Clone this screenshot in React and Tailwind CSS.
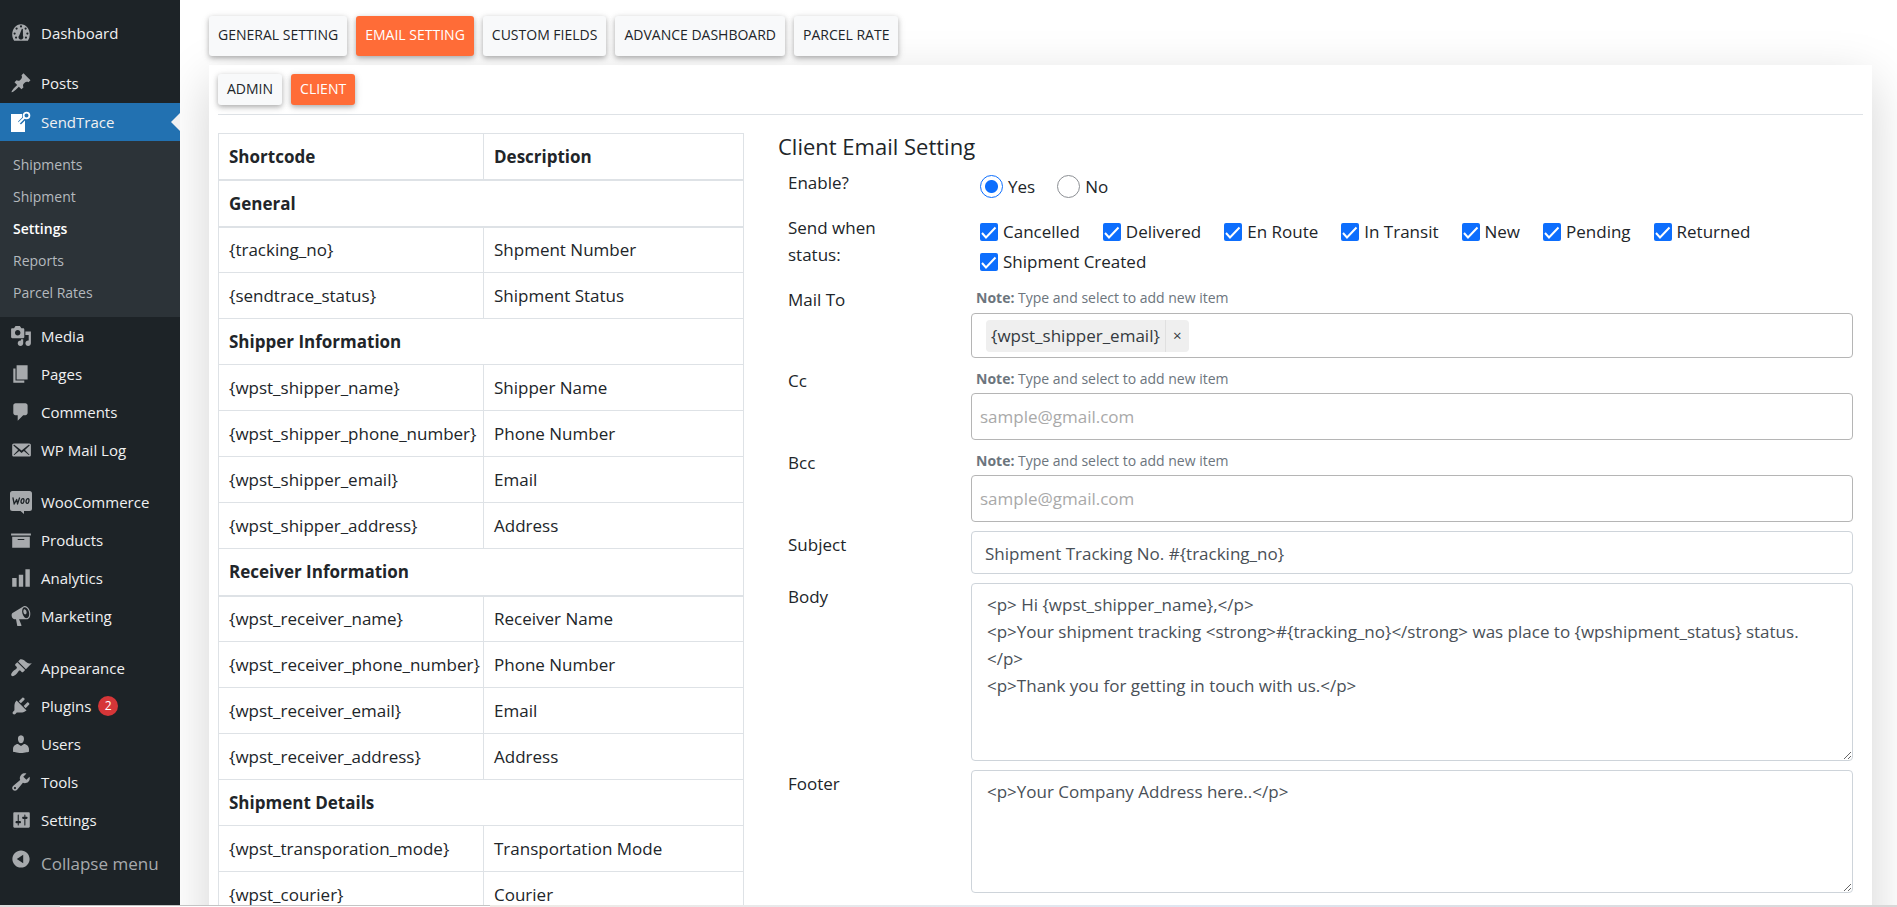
import { Fragment } from "react";

const ICONS = {
  dashboard:
    "M3.76 17h12.48A9.9 9.9 0 0 0 18 11.38C18 6.2 14.42 2 10 2S2 6.2 2 11.38c0 2.07.66 4 1.76 5.62zM9 4a1 1 0 1 1 2 0 1 1 0 0 1-2 0zM5 6a1 1 0 1 1 2 0 1 1 0 0 1-2 0zm8.2 0a1 1 0 1 1 2 0 1 1 0 0 1-2 0zM3.2 10.500a1 1 0 1 1 2 0 1 1 0 0 1-2 0zm11.6 0a1 1 0 1 1 2 0 1 1 0 0 1-2 0zM4.5 14.200a1 1 0 1 1 2 0 1 1 0 0 1-2 0zm9 0a1 1 0 1 1 2 0 1 1 0 0 1-2 0zM10.8 6.200l.9.2.1 6.4c.4.5.5 1.2.1 1.9-.6 1.2-2.3 1.6-3.4.7-1-.8-1-2.3-.1-3.100z",
  pin: "M10.44 3.02l1.82-1.82 6.36 6.35-1.83 1.82c-1.05-.68-2.48-.57-3.41.36l-.75.75c-.92.93-1.04 2.35-.35 3.41l-1.83 1.82-2.41-2.41-2.8 2.79c-.42.42-3.38 2.71-3.8 2.29s1.86-3.39 2.28-3.81l2.79-2.79L4.1 9.36l1.83-1.82c1.05.69 2.48.57 3.4-.36l.75-.75c.93-.92 1.05-2.35.36-3.41z",
  media:
    "M13 11V4c0-.55-.45-1-1-1h-1.67L9 1H5L3.67 3H2c-.55 0-1 .45-1 1v7c0 .55.45 1 1 1h10c.55 0 1-.45 1-1zM7 4.5c1.38 0 2.5 1.12 2.5 2.5S8.38 9.5 7 9.500 4.5 8.38 4.5 7 5.62 4.5 7 4.500zM14 6h5v10.5c0 1.38-1.12 2.5-2.5 2.5S14 17.88 14 16.5s1.12-2.5 2.5-2.5c.17 0 .34.02.5.05V9h-3V6zm-4 8.05V13h2v3.5c0 1.38-1.12 2.5-2.5 2.5S7 17.88 7 16.5 8.12 14 9.5 14c.17 0 .34.02.5.05z",
  page: "M6 15V2h10v13H6zm-1 1h8v2H3V5h2v11z",
  comment:
    "M5 2h9c1.1 0 2 .9 2 2v7c0 1.1-.9 2-2 2h-2l-5 5v-5H5c-1.1 0-2-.9-2-2V4c0-1.1.9-2 2-2z",
  mail: "M19 14.5v-9c0-.83-.67-1.5-1.5-1.5H3.49c-.83 0-1.5.67-1.5 1.5v9c0 .83.67 1.5 1.5 1.5H17.5c.83 0 1.5-.67 1.5-1.5zm-1.31-9.11c.33.33.15.67-.03.84L13.6 9.95l3.9 4.06c.12.14.2.36.06.51-.13.16-.43.15-.56.05l-4.37-3.73-2.14 1.95-2.13-1.95-4.37 3.73c-.13.1-.43.11-.56-.05-.14-.15-.06-.37.06-.51l3.9-4.06-4.06-3.72c-.18-.17-.36-.51-.03-.84s.67-.17.95.07l6.24 5.04 6.25-5.04c.28-.24.62-.4.95-.07z",
  archive: "M19 4v2H1V4h18zM2 7h16v10H2V7zm11 3V9H7v1h6z",
  chart: "M18 18V2h-4v16h4zm-6 0V7H8v11h4zm-6 0v-8H2v8h4z",
  megaphone:
    "M18.15 5.94c.46 1.62.38 3.22-.02 4.48-.42 1.28-1.26 2.18-2.3 2.48-.16.06-.26.06-.4.06-.06.02-.12.02-.18.02-.06.02-.14.02-.22.02h-6.8l2.22 5.5c.02.14-.06.26-.14.34-.08.1-.24.16-.34.16H6.95c-.1 0-.26-.06-.34-.16-.08-.08-.16-.2-.14-.34l-1-5.5H4.25l-.02-.02c-.5.06-1.08-.18-1.54-.62s-.88-1.08-1.06-1.88c-.24-.8-.2-1.56-.02-2.2.18-.62.58-1.08 1.06-1.3l.02-.02 9-5.4c.1-.06.18-.1.24-.16.06-.04.14-.08.24-.12.16-.08.28-.12.5-.18 1.04-.3 2.24.1 3.22.98s1.84 2.24 2.26 3.86zm-2.58 5.98h-.02c.4-.1.74-.34 1.04-.7.58-.7.86-1.76.86-3.04 0-.64-.1-1.3-.28-1.98-.34-1.36-1.02-2.5-1.78-3.24s-1.68-1.1-2.46-.88c-.82.22-1.4.96-1.7 2-.32 1.04-.28 2.36.06 3.72.38 1.36 1 2.5 1.8 3.24.78.74 1.62 1.1 2.48.88zm-2.54-7.96c.22-.04.42-.02.62.04.38.16.76.48 1.02 1s.42 1.2.42 1.78c0 .3-.04.56-.12.8-.18.48-.44.84-.86.94-.34.1-.8-.06-1.14-.4s-.64-.86-.78-1.5c-.18-.62-.12-1.24.02-1.72s.48-.84.82-.94z",
  brush:
    "M14.48 11.06L7.41 3.99l1.5-1.5c.5-.56 2.3-.47 3.51.32 1.21.8 1.43 1.28 2.91 2.1 1.18.64 2.45 1.26 4.45.85zm-.71.71L6.7 4.7 4.93 6.47c-.39.39-.39 1.02 0 1.41l1.06 1.06c.39.39.39 1.03 0 1.42-.6.6-1.43 1.11-2.21 1.69-.35.26-.7.53-1.01.84C1.43 14.23.4 16.08 1.4 17.07c.99 1 2.84-.03 4.18-1.36.31-.31.58-.66.85-1.02.57-.78 1.08-1.61 1.69-2.21.39-.39 1.02-.39 1.41 0l1.06 1.06c.39.39 1.02.39 1.41 0z",
  plug: "M13.11 4.36L9.87 7.6 8 5.73l3.24-3.24c.35-.34 1.05-.2 1.56.32.52.51.66 1.21.31 1.55zm-8 1.77l.91-1.12 9.01 9.01-1.19.84c-.71.71-2.63 1.16-3.82 1.16H6.14L4.9 17.26c-.59.59-1.54.59-2.12 0-.59-.58-.59-1.53 0-2.12l1.24-1.24v-3.88c0-1.13.4-3.19 1.09-3.89zm7.26 3.97l3.24-3.24c.34-.35 1.04-.21 1.55.31.52.51.66 1.21.31 1.55l-3.24 3.25z",
  user: "M10 9.25c-2.27 0-2.73-3.44-2.73-3.44C7 4.02 7.82 2 9.97 2c2.16 0 2.98 2.02 2.71 3.81 0 0-.41 3.44-2.68 3.44zm0 2.57L12.72 10c2.39 0 4.52 2.33 4.52 4.53v2.49s-3.65 1.13-7.24 1.13c-3.65 0-7.24-1.13-7.24-1.13v-2.49c0-2.25 1.94-4.48 4.47-4.48z",
  wrench:
    "M16.68 9.77c-1.34 1.34-3.3 1.67-4.95.99l-5.41 6.52c-.99.99-2.59.99-3.58 0s-.99-2.59 0-3.57l6.52-5.42c-.68-1.65-.35-3.61.99-4.95 1.28-1.28 3.12-1.62 4.72-1.06l-2.89 2.89 2.82 2.82 2.86-2.87c.53 1.58.18 3.39-1.08 4.65zM3.81 16.21c.4.39 1.04.39 1.43 0 .4-.4.4-1.04 0-1.43-.39-.4-1.03-.4-1.43 0-.39.39-.39 1.03 0 1.43z",
  sliders:
    "M18 16V4c0-.55-.45-1-1-1H4c-.55 0-1 .45-1 1v12c0 .55.45 1 1 1h13c.55 0 1-.45 1-1zM8 11h1c.55 0 1 .45 1 1s-.45 1-1 1H8v1.5c0 .28-.22.5-.5.5s-.5-.22-.5-.5V13H6c-.55 0-1-.45-1-1s.45-1 1-1h1V5.5c0-.28.22-.5.5-.5s.5.22.5.5V11zm5-2h-1c-.55 0-1-.45-1-1s.45-1 1-1h1V5.5c0-.28.22-.5.5-.5s.5.22.5.5V7h1c.55 0 1 .45 1 1s-.45 1-1 1h-1v5.5c0 .28-.22.5-.5.5s-.5-.22-.5-.5V9z",
  collapse:
    "M10 2.16c4.33 0 7.84 3.51 7.84 7.84s-3.51 7.84-7.84 7.84S2.16 14.33 2.16 10 5.71 2.16 10 2.16zm2 11.72V6.12L6.18 9.97z",
};

function Icon({ name }) {
  if (name === "sendtrace") {
    return (
      <svg viewBox="0 0 22 22" className="size-[22px] shrink-0" aria-hidden="true">
        <path fill="#fff" d="M1 3h12v3h2v15H1z" />
        <path fill="none" stroke="#2271b1" strokeWidth="4" d="M9.5 12l7-7" />
        <circle cx="16.500" cy="4.500" r="4.500" fill="#2271b1" />
        <path fill="none" stroke="#fff" strokeWidth="1.800" strokeLinecap="round" d="M9.500 11.500l5-5" />
        <circle cx="16.500" cy="4.500" r="2.900" fill="#2271b1" stroke="#fff" strokeWidth="1.800" />
      </svg>
    );
  }
  if (name === "woo") {
    return (
      <svg viewBox="0 0 24 24" className="-mx-px size-6 shrink-0" aria-hidden="true">
        <path
          fill="#a7aaad"
          d="M3.500 1h17A2.500 2.500 0 0 1 23 3.500v15a2.500 2.500 0 0 1-2.500 2.500H15v3l-3.500-3h-8A2.500 2.500 0 0 1 1 18.500v-15A2.500 2.500 0 0 1 3.500 1z"
        />
        <g fill="none" stroke="#1d2327" strokeWidth="1.300" strokeLinecap="round" strokeLinejoin="round">
          <path d="M4 8l1.200 6 2.500-4.500.8 4.500L10.500 8" />
          <ellipse cx="13.500" cy="11" rx="1.400" ry="2.400" transform="rotate(12 13.500 11)" />
          <ellipse cx="18.500" cy="11" rx="1.400" ry="2.400" transform="rotate(12 18.500 11)" />
        </g>
      </svg>
    );
  }
  return (
    <svg viewBox="0 0 20 20" className="size-[22px] shrink-0 fill-[#a7aaad]" aria-hidden="true">
      <path fillRule="evenodd" d={ICONS[name]} />
    </svg>
  );
}

const SUBMENU = ["Shipments", "Shipment", "Settings", "Reports", "Parcel Rates"];

const GROUPS = [
  [
    ["media", "Media"],
    ["page", "Pages"],
    ["comment", "Comments"],
    ["mail", "WP Mail Log"],
  ],
  [
    ["woo", "WooCommerce"],
    ["archive", "Products"],
    ["chart", "Analytics"],
    ["megaphone", "Marketing"],
  ],
  [
    ["brush", "Appearance"],
    ["plug", "Plugins", 2],
    ["user", "Users"],
    ["wrench", "Tools"],
    ["sliders", "Settings"],
  ],
];

function MenuItem({ icon, label, badge, active }) {
  return (
    <li className={active ? "relative bg-[#2271b1]" : "relative"}>
      <a href="#" className="flex h-[38px] items-center gap-[9px] pl-[10px] text-[15px] text-[#f0f0f1]">
        <Icon name={icon} />
        <span>{label}</span>
        {badge ? (
          <span className="-ml-0.5 flex size-5 items-center justify-center rounded-full bg-[#d63638] text-xs text-white">
            {badge}
          </span>
        ) : null}
      </a>
      {active ? (
        <span className="absolute top-1/2 right-0 -translate-y-1/2 border-y-[9px] border-r-[9px] border-y-transparent border-r-[#f0f0f1]" />
      ) : null}
    </li>
  );
}

function Sidebar() {
  return (
    <nav aria-label="Admin menu" className="z-10 w-[180px] shrink-0 bg-[#1d2327] pt-[14px]">
      <ul>
        <MenuItem icon="dashboard" label="Dashboard" />
      </ul>
      <ul className="mt-3 flex flex-col gap-px">
        <MenuItem icon="pin" label="Posts" />
        <MenuItem icon="sendtrace" label="SendTrace" active />
      </ul>
      <ul className="bg-[#2c3338] pt-2 pb-2 text-sm">
        {SUBMENU.map((label) => (
          <li key={label}>
            <a
              href="#"
              className={
                label === "Settings"
                  ? "block pl-[13px] leading-8 font-semibold text-white"
                  : "block pl-[13px] leading-8 text-[#b4b9be]"
              }
            >
              {label}
            </a>
          </li>
        ))}
      </ul>
      <div className="flex flex-col gap-[14px]">
        {GROUPS.map((items) => (
          <ul key={items[0][1]}>
            {items.map(([icon, label, badge]) => (
              <MenuItem key={label} icon={icon} label={label} badge={badge} />
            ))}
          </ul>
        ))}
      </div>
      <button type="button" className="mt-[9px] flex items-start gap-[9px] pl-[10px] text-[17px] leading-8 text-[#a7aaad]">
        <Icon name="collapse" />
        <span>Collapse menu</span>
      </button>
    </nav>
  );
}

const TABS = ["GENERAL SETTING", "EMAIL SETTING", "CUSTOM FIELDS", "ADVANCE DASHBOARD", "PARCEL RATE"];

function Tab({ label, active, small }) {
  const size = small ? "h-[31px]" : "h-10";
  const tone = active ? "bg-[#ff6c37] text-white" : "bg-[#f8f9fa] text-[#212529]";
  return (
    <button
      type="button"
      className={`${size} ${tone} rounded-[3px] px-[9px] pb-0.5 text-sm shadow-[0_2px_5px_rgba(0,0,0,0.26),0_2px_10px_rgba(0,0,0,0.1)]`}
    >
      {label}
    </button>
  );
}

const SECTIONS = [
  {
    title: "General",
    ruled: true,
    rows: [
      ["{tracking_no}", "Shpment Number"],
      ["{sendtrace_status}", "Shipment Status"],
    ],
  },
  {
    title: "Shipper Information",
    rows: [
      ["{wpst_shipper_name}", "Shipper Name"],
      ["{wpst_shipper_phone_number}", "Phone Number"],
      ["{wpst_shipper_email}", "Email"],
      ["{wpst_shipper_address}", "Address"],
    ],
  },
  {
    title: "Receiver Information",
    ruled: true,
    rows: [
      ["{wpst_receiver_name}", "Receiver Name"],
      ["{wpst_receiver_phone_number}", "Phone Number"],
      ["{wpst_receiver_email}", "Email"],
      ["{wpst_receiver_address}", "Address"],
    ],
  },
  {
    title: "Shipment Details",
    rows: [
      ["{wpst_transporation_mode}", "Transportation Mode"],
      ["{wpst_courier}", "Courier"],
    ],
  },
];

const CELL = "border border-[#dee2e6] pl-[10px] text-left whitespace-nowrap";

function ShortcodeTable() {
  return (
    <table className="w-full table-fixed border-collapse leading-[27px]">
      <thead>
        <tr>
          <th className={`${CELL} h-[46px] w-[265px] border-b-2 font-bold`}>Shortcode</th>
          <th className={`${CELL} h-[46px] border-b-2 font-bold`}>Description</th>
        </tr>
      </thead>
      <tbody>
        {SECTIONS.map(({ title, ruled, rows }) => (
          <Fragment key={title}>
            <tr>
              <th
                colSpan={2}
                scope="colgroup"
                className={`${CELL} font-bold ${ruled ? "h-[47px] border-b-2" : "h-[46px]"}`}
              >
                {title}
              </th>
            </tr>
            {rows.map(([code, text]) => (
              <tr key={code}>
                <td className={`${CELL} h-[46px]`}>{code}</td>
                <td className={`${CELL} h-[46px]`}>{text}</td>
              </tr>
            ))}
          </Fragment>
        ))}
      </tbody>
    </table>
  );
}

const STATUSES = [
  "Cancelled",
  "Delivered",
  "En Route",
  "In Transit",
  "New",
  "Pending",
  "Returned",
  "Shipment Created",
];

function Radio({ label, checked }) {
  return (
    <label className="flex items-center gap-[5px]">
      <input
        type="radio"
        name="enable"
        defaultChecked={checked}
        className="size-[23px] appearance-none rounded-full border border-[#8c8f94] bg-white checked:border-[#0d6efd] checked:bg-[radial-gradient(circle,#0d6efd_6px,transparent_7px)]"
      />
      {label}
    </label>
  );
}

function Checkbox({ label }) {
  return (
    <label className="flex items-center gap-[5px]">
      <span className="relative flex size-[18px]">
        <input type="checkbox" defaultChecked className="size-[18px] appearance-none rounded-[2px] bg-[#0d6efd]" />
        <svg viewBox="0 0 18 18" className="pointer-events-none absolute inset-0" aria-hidden="true">
          <path d="M2 10l4 4.500 9.500-10" fill="none" stroke="#fff" strokeWidth="2" />
        </svg>
      </span>
      {label}
    </label>
  );
}

function Row({ label, htmlFor, className, children }) {
  return (
    <div className={`flex ${className}`}>
      <div className="w-[183px] shrink-0 pr-16 leading-[27px]">
        {htmlFor ? <label htmlFor={htmlFor}>{label}</label> : label}
      </div>
      <div className="min-w-0 flex-1">{children}</div>
    </div>
  );
}

function Note() {
  return (
    <p className="pl-[5px] text-sm leading-[23px] text-[#6c757d]">
      <b className="font-bold">Note:</b> Type and select to add new item
    </p>
  );
}

const BOX = "block w-full rounded-[4px] border bg-white";
const TEXTAREA = `${BOX} resize border-[#ced4da] py-[7px] pr-8 pl-[15px] leading-[27px] text-[#495057]`;

const BODY = `<p> Hi {wpst_shipper_name},</p>
<p>Your shipment tracking <strong>#{tracking_no}</strong> was place to {wpshipment_status} status.</p>
<p>Thank you for getting in touch with us.</p>`;

function EmailForm() {
  return (
    <form className="min-w-0 flex-1 pr-[10px]">
      <h1 className="text-[22px] leading-[27px] font-medium">Client Email Setting</h1>
      <div className="mt-[9px] pl-[10px]">
        <Row label="Enable?" className="h-[45px]">
          <div className="flex items-center gap-[22px] pt-[5px] pl-[9px]">
            <Radio label="Yes" checked />
            <Radio label="No" />
          </div>
        </Row>
        <Row label="Send when status:" className="h-[72px]">
          <div className="flex flex-wrap gap-x-[23px] pt-[3px] pl-[9px] leading-[30px]">
            {STATUSES.map((s) => (
              <Checkbox key={s} label={s} />
            ))}
          </div>
        </Row>
        <Row label="Mail To" htmlFor="mail-to" className="h-[81px]">
          <Note />
          <div className={`${BOX} mt-1 flex h-[45px] items-center border-[#b5b5b5] px-[14px]`}>
            <span className="flex h-8 shrink-0 items-center rounded-[4px] bg-[#efefef] text-[#343a40]">
              <span className="px-[5px]">{"{wpst_shipper_email}"}</span>
              <button
                type="button"
                aria-label="Remove"
                className="h-full w-6 border-l border-[#e0e0e0] text-[15px]"
              >
                ×
              </button>
            </span>
            <input id="mail-to" className="min-w-0 flex-1 outline-none" />
          </div>
        </Row>
        <Row label="Cc" htmlFor="cc" className="h-[82px]">
          <Note />
          <input
            id="cc"
            placeholder="sample@gmail.com"
            className={`${BOX} mt-[3px] h-[47px] border-[#b5b5b5] px-2 placeholder:text-[#a9a9a9]`}
          />
        </Row>
        <Row label="Bcc" htmlFor="bcc" className="h-[82px]">
          <Note />
          <input
            id="bcc"
            placeholder="sample@gmail.com"
            className={`${BOX} mt-[3px] h-[47px] border-[#b5b5b5] px-2 placeholder:text-[#a9a9a9]`}
          />
        </Row>
        <Row label="Subject" htmlFor="subject" className="h-[52px]">
          <input
            id="subject"
            defaultValue="Shipment Tracking No. #{tracking_no}"
            className={`${BOX} h-[43px] border-[#ced4da] px-[13px] pt-0.5 text-[#495057]`}
          />
        </Row>
        <Row label="Body" htmlFor="body" className="pb-[9px]">
          <textarea id="body" defaultValue={BODY} className={`${TEXTAREA} h-[178px]`} />
        </Row>
        <Row label="Footer" htmlFor="footer" className="pb-3">
          <textarea id="footer" defaultValue="<p>Your Company Address here..</p>" className={`${TEXTAREA} h-[123px]`} />
        </Row>
      </div>
    </form>
  );
}

export default function App() {
  return (
    <div className="flex h-screen flex-col overflow-hidden bg-white font-['Open_Sans','Noto_Sans',sans-serif] text-[17px] text-[#212529]">
      <div className="flex min-h-0 flex-1 overflow-hidden">
        <Sidebar />
        <main className="min-w-0 flex-1 pt-4 pr-[25px] pl-[29px]">
          <div className="relative flex gap-[9px] pb-[9px]">
            {TABS.map((t) => (
              <Tab key={t} label={t} active={t === "EMAIL SETTING"} />
            ))}
          </div>
          <section className="h-full bg-white px-[9px] shadow-[0_16px_48px_rgba(0,0,0,0.175)]">
            <div className="flex gap-[9px] border-b border-[#dee2e6] py-[9px]">
              <Tab label="ADMIN" small />
              <Tab label="CLIENT" small active />
            </div>
            <div className="flex gap-[34px] pt-[18px]">
              <div className="w-[526px] shrink-0">
                <ShortcodeTable />
              </div>
              <EmailForm />
            </div>
          </section>
        </main>
      </div>
      <div className="flex h-0.5 shrink-0">
        <div className="w-[60px] bg-[#dcdcdc]" />
        <div className="w-[430px] border-t border-[#c4c4c4] bg-white" />
        <div className="flex-1 bg-linear-to-r from-[#efebe6] via-[#dfe6f1] to-[#d8d8d8]" />
      </div>
    </div>
  );
}
